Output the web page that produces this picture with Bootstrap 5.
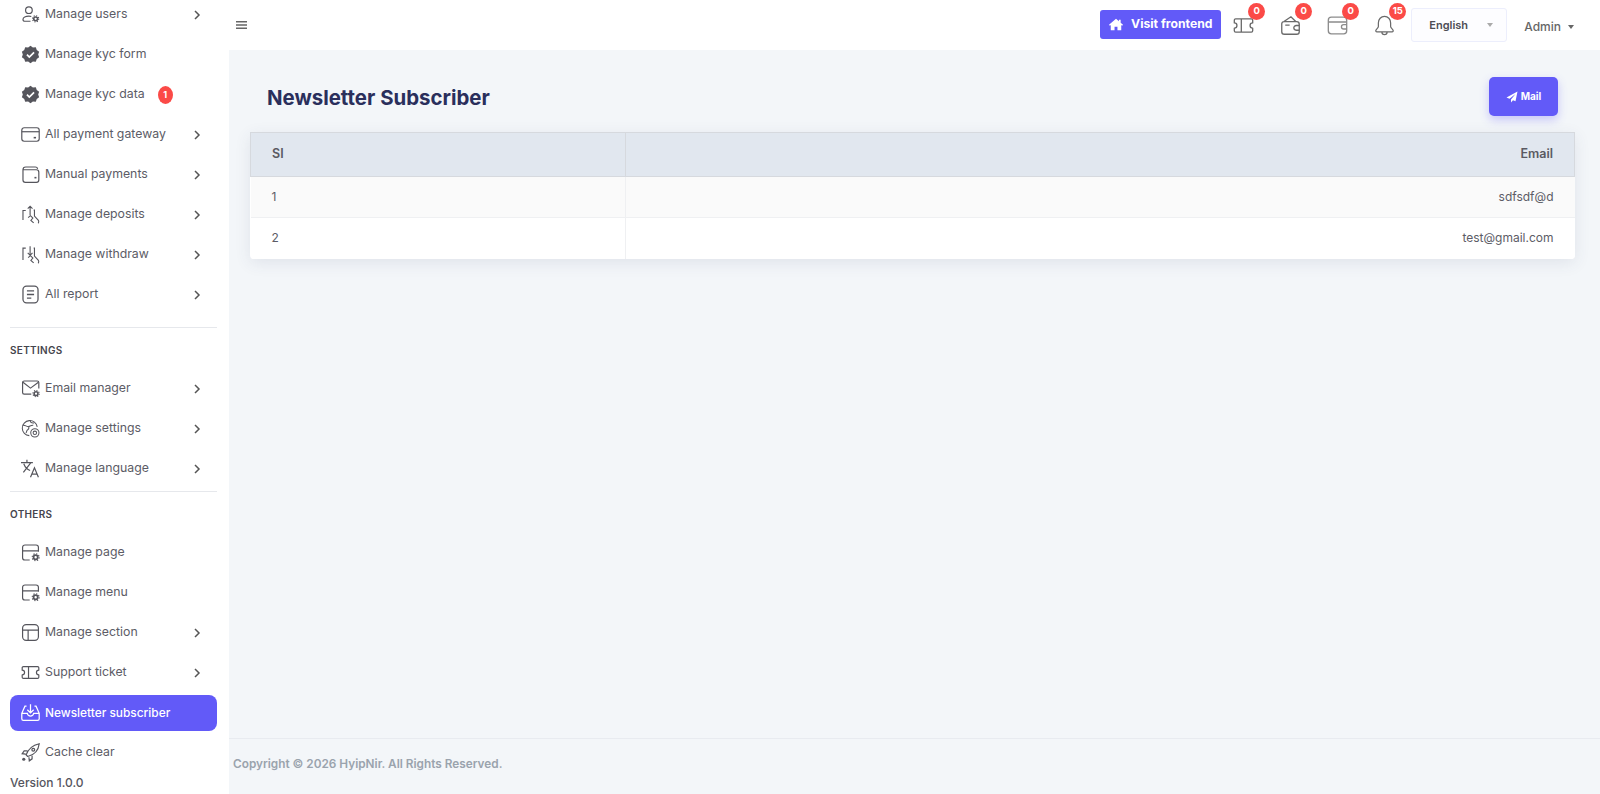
<!DOCTYPE html>
<html lang="en">
<head>
<meta charset="utf-8">
<title>Newsletter Subscriber</title>
<link href="https://cdn.jsdelivr.net/npm/bootstrap@5.3.0/dist/css/bootstrap.min.css" rel="stylesheet">
<style>
html,body{height:794px;overflow:hidden}
body{font-family:Inter,"Noto Sans",sans-serif;font-size:13px;color:#5c5c66;background:#f3f6f9}
.shell{height:794px}
.side{width:229px;height:794px;overflow:hidden;background:#fff;padding:0 12px 0 10px;flex:none}
.side-list{margin-top:-3.5px}
.side-item{height:36px;margin-bottom:4px;padding-left:11px;padding-right:16px;border-radius:8px;color:#5c5c66;text-decoration:none;font-size:12.3px;gap:5px}
.side-item svg.ic{width:19px;height:19px;flex:none;color:#55555c}
.side-item.on{background:#625af8;color:#fff;font-weight:500;font-size:11.9px}
.side-item.on svg.ic{color:#fff}
.chev{width:8px;height:10px;margin-left:auto;color:#555}
.cnt{background:#fb4a47;color:#fff;border-radius:50%;width:15px;height:18px;font-size:9px;font-weight:700;margin-left:8px}
.side-rule{border-top:1px solid #e6e8ec;margin:14px 0 0;opacity:1}
.side-rule.tight{margin-top:0}
.side-head{font-size:10px;font-weight:600;color:#45454d;letter-spacing:.3px;height:43px;padding-top:3px}
.ver{font-size:12px;color:#55555e;font-weight:500;margin-top:-1px}
.main-col{min-width:0}
.topbar{height:50px;background:#fff;padding:0 26px 0 7px}
.burger{width:11px;height:10px;color:#666}
.visit{background:#625af8;border:0;border-radius:3px;height:29px;width:121px;color:#fff;font-size:12.2px;font-weight:700;gap:8px;margin-top:-1px}
.visit:hover,.mailbtn:hover{background:#625af8;color:#fff}
.visit svg{width:14px;height:13px}
.tb-ic{width:47px;height:34px;color:#6a6a6a;padding-right:2px}
.tb-ic svg{width:21px;height:21px}
.tb-ic.soft{color:#8c8c8c}
.dot{position:absolute;top:-5px;right:3px;min-width:17px;height:17px;border-radius:50%;background:#fb4a47;color:#fff;font-size:9.5px;font-weight:700}
.lang{width:96px;height:34px;border:1px solid #eceefc;border-radius:3px;background:#fdfdff;padding:0 13px 0 17px;font-size:11px;font-weight:600;color:#4d4d55;margin-left:2px}
.tri{width:0;height:0;border-left:3.5px solid transparent;border-right:3.5px solid transparent;border-top:4px solid #aaa}
.admin{margin-left:17px;font-size:12px;font-weight:500;color:#666;gap:7px;margin-top:3px}
.admin .tri{border-top-color:#666;flex:none}
.body-area{padding:0 25px 0 21px}
.pagehead{height:82px;padding:27px 17px 0 17px}
.pagehead h1{font-size:20.4px;font-weight:700;color:#2a2f5c;margin:0;padding-top:9px}
.mailbtn{background:#625af8;border:0;border-radius:5px;width:69px;height:39px;color:#fff;font-size:10px;font-weight:700;box-shadow:0 4px 10px rgba(98,90,248,.3);gap:3px}
.mailbtn svg{width:12px;height:12px}
.tbl-wrap{box-shadow:0 4px 16px rgba(60,70,110,.1);border-radius:0 0 4px 4px;background:#fff;overflow:hidden}
.tbl{margin:0;font-size:12px;color:#5c5c66}
.tbl>thead>tr>th{background:#e1e7ef;height:44px;padding:0 21px;border:1px solid #d6d9de;font-weight:600;color:#5a5a62;vertical-align:middle;font-size:12.5px}
.tbl>tbody>tr>td{height:41px;padding:0 21px;vertical-align:middle;border:0;border-bottom:1px solid #eff0f2;color:#5c5c66;background:#fff;box-shadow:none}
.tbl>tbody>tr:nth-child(odd)>td{background:#fafafa}
.tbl>tbody>tr:last-child>td{border-bottom:0}
.tbl td:first-child,.tbl th:first-child{width:375px}
.tbl>tbody>tr>td:first-child{border-right:1px solid #eff0f2}
.foot{height:56px;border-top:1px solid #e8ebf0;padding:0 0 4px 4px;font-size:11.8px;font-weight:600;color:#9aa3ad}
</style>
</head>
<body>
<svg width="0" height="0" class="position-absolute">
<defs>
<symbol id="gear" viewBox="0 0 10 10"><circle cx="5" cy="5" r="2.400" fill="none" stroke="currentColor" stroke-width="2"/><circle cx="5" cy="5" r="4" fill="none" stroke="currentColor" stroke-width="1.300" stroke-dasharray="1.500 1.640"/></symbol>
<symbol id="i-user" viewBox="0 0 24 24"><g fill="none" stroke="currentColor" stroke-width="1.500"><circle cx="10" cy="6.500" r="4.200"/><path d="M13 14.500c-1-.3-2-.5-3-.5-4 0-7.500 1.700-7.500 4.200 0 1.200 1 2.300 2.500 2.300H12"/></g><use href="#gear" x="13.500" y="12.500" width="10" height="10"/></symbol>
<symbol id="i-badge" viewBox="0 0 24 24"><path fill="currentColor" d="M12 1l3 2.300 3.700-.4 1.200 3.500 3 2.200-1.200 3.400 1.200 3.400-3 2.200-1.200 3.500-3.700-.4L12 23l-3-2.300-3.700.4-1.200-3.500-3-2.200L2.300 12 1.100 8.600l3-2.200 1.200-3.500 3.700.4z"/><path d="M7.500 12.300l3 3 6-6" fill="none" stroke="#fff" stroke-width="2.200"/></symbol>
<symbol id="i-card" viewBox="0 0 24 24"><g fill="none" stroke="currentColor" stroke-width="1.500"><rect x="1" y="3.500" width="22" height="17" rx="3"/><path d="M1 8.500h22"/><path d="M16 16h3" stroke-width="2"/></g></symbol>
<symbol id="i-wallet" viewBox="0 0 24 24"><g fill="none" stroke="currentColor" stroke-width="1.500"><path d="M2.500 6V19a3 3 0 0 0 3 3h14a3 3 0 0 0 3-3V9a3 3 0 0 0-3-3H2.500zM2.500 6A3.500 3.500 0 0 1 6 2.500h12A3 3 0 0 1 21 5"/><path d="M17 16h2.500" stroke-width="2"/></g></symbol>
<symbol id="i-dep" viewBox="0 0 24 24"><g fill="none" stroke="currentColor" stroke-width="1.400"><path d="M11.500 13V1.500M8.500 4.500l3-3 3 3M2.500 19V7h3.500M16 6.500h1v7.500l5 5.500c.6 1 .4 3-.5 3.500"/><path d="M9 16l3-2.500 3 3-2.500 3 3.500 3"/></g></symbol>
<symbol id="i-wd" viewBox="0 0 24 24"><g fill="none" stroke="currentColor" stroke-width="1.400"><path d="M11.500 1.500V13M8.500 10l3 3 3-3M2.500 19V4h3.500M16 4h1v10l5 5.500c.6 1 .4 3-.5 3.500"/><path d="M9 16l3-2.500 3 3-2.500 3 3.500 3"/></g></symbol>
<symbol id="i-doc" viewBox="0 0 24 24"><g fill="none" stroke="currentColor" stroke-width="1.600"><rect x="2.500" y="1.500" width="19" height="21" rx="4.500"/><path d="M7.500 7.500h9M7.500 12h9M7.500 16.500h5.500"/></g></symbol>
<symbol id="i-mail" viewBox="0 0 24 24"><g fill="none" stroke="currentColor" stroke-width="1.500"><path d="M13 19H4a2 2 0 0 1-2-2V4.500a2 2 0 0 1 2-2h16.500a2 2 0 0 1 2 2v7.500"/><path d="M2.500 4l9.500 7.500L22 4"/></g><use href="#gear" x="14" y="13.500" width="10" height="10"/></symbol>
<symbol id="i-globe" viewBox="0 0 24 24"><g fill="none" stroke="currentColor" stroke-width="1.300"><path d="M10.500 21A9.500 9.500 0 1 1 20.500 10"/><path d="M2 8c3-1 4.500 1.500 6.500 1.500s2 3 0 4-1 3.500-2.500 4M12 1.500c-1 2.500 1 4 4.500 3.500M9.500 9.500c2-.5 4-2 6-1.500"/><circle cx="17.500" cy="17.500" r="5.200"/><circle cx="17.500" cy="17.500" r="2.200"/></g></symbol>
<symbol id="i-lang" viewBox="0 0 24 24"><g fill="none" stroke="currentColor" stroke-width="1.500"><path d="M0 4.500h15M7.500 1v3.500M3 17L12.500 4.500M3.500 6c1.500 4 5 7.500 8 8.500"/><path d="M12 23l5-12 5 12M13.500 19h7"/></g></symbol>
<symbol id="i-page" viewBox="0 0 24 24"><g fill="none" stroke="currentColor" stroke-width="1.500"><path d="M11 21.500H5a3 3 0 0 1-3-3v-13a3 3 0 0 1 3-3h14a3 3 0 0 1 3 3V11M2 10h20"/></g><use href="#gear" x="13" y="12.500" width="11" height="11"/></symbol>
<symbol id="i-sec" viewBox="0 0 24 24"><g fill="none" stroke="currentColor" stroke-width="1.500"><rect x="2" y="2" width="20" height="20" rx="4.500"/><path d="M2 9h20M9 9v13"/></g></symbol>
<symbol id="i-tick" viewBox="0 0 24 24"><g fill="none" stroke="currentColor" stroke-width="1.500" stroke-linejoin="round"><path d="M3 4.500h18a1.500 1.500 0 0 1 1.500 1.500v3a3 3 0 0 0 0 6v3a1.500 1.500 0 0 1-1.500 1.500H3A1.500 1.500 0 0 1 1.500 18v-3a3 3 0 0 0 0-6V6A1.500 1.500 0 0 1 3 4.500zM9.500 4.500v15"/></g></symbol>
<symbol id="i-inbox" viewBox="0 0 24 24"><g fill="none" stroke="currentColor" stroke-width="1.600"><path d="M12 1.500V12M8 8.500l4 4 4-4M7 4H5L1 13v7a2 2 0 0 0 2 2h18a2 2 0 0 0 2-2v-7L19 4h-2M1 13h7c0 2 2 3.500 4 3.500s4-1.500 4-3.500h7"/></g></symbol>
<symbol id="i-rocket" viewBox="0 0 24 24"><g fill="none" stroke="currentColor" stroke-width="1.500"><path d="M8.500 17L6.500 15C9 8 14 3 23 1c-1 9-6 14-14.500 16zM8 10H4l-2.500 3.500L6 14M14 16v4l-3.500 2.500L10 18"/><circle cx="15.500" cy="8.500" r="1.800"/></g><circle cx="3.500" cy="20.500" r="2" fill="currentColor"/></symbol>
<symbol id="i-chev" viewBox="0 0 8 10"><path d="M2 1l4 4-4 4" fill="none" stroke="currentColor" stroke-width="1.500"/></symbol>
<symbol id="i-wal2" viewBox="0 0 24 24"><g fill="none" stroke="currentColor" stroke-width="1.500"><path d="M4.500 7.500H19a3 3 0 0 1 3 3V19a3 3 0 0 1-3 3H5a3 3 0 0 1-3-3V10a2.500 2.500 0 0 1 2.500-2.500zM4.500 7.500L12.500 2l5.500 5.500M6 11.500h5"/><path d="M22 12h-3.500a2.700 2.700 0 0 0 0 5.400H22"/></g></symbol>
<symbol id="i-wal3" viewBox="0 0 24 24"><g fill="none" stroke="currentColor" stroke-width="1.500"><rect x="1.500" y="2.500" width="21" height="19" rx="3.500"/><path d="M1.500 8h21M22.500 11h-3.500a2.500 2.500 0 0 0 0 5h3.500"/></g></symbol>
<symbol id="i-bell" viewBox="0 0 24 24"><g fill="none" stroke="currentColor" stroke-width="1.400"><path d="M12 1.500c-4 0-7 3.300-7 7.500v4c0 2-3 3.500-3 5 0 .8.500 1.200 1.200 1.200h17.600c.7 0 1.200-.4 1.200-1.200 0-1.500-3-3-3-5V9c0-4.200-3-7.500-7-7.500zM9 19.500a3 3 0 0 0 6 0"/></g></symbol>
</defs>
</svg>
<div class="shell d-flex">
<aside class="side d-flex flex-column">
<div class="side-list">
<a class="side-item d-flex align-items-center" href="#"><svg class="ic"><use href="#i-user"/></svg><span>Manage users</span><svg class="chev"><use href="#i-chev"/></svg></a>
<a class="side-item d-flex align-items-center" href="#"><svg class="ic"><use href="#i-badge"/></svg><span>Manage kyc form</span></a>
<a class="side-item d-flex align-items-center" href="#"><svg class="ic"><use href="#i-badge"/></svg><span>Manage kyc data</span><span class="cnt d-flex align-items-center justify-content-center">1</span></a>
<a class="side-item d-flex align-items-center" href="#"><svg class="ic"><use href="#i-card"/></svg><span>All payment gateway</span><svg class="chev"><use href="#i-chev"/></svg></a>
<a class="side-item d-flex align-items-center" href="#"><svg class="ic"><use href="#i-wallet"/></svg><span>Manual payments</span><svg class="chev"><use href="#i-chev"/></svg></a>
<a class="side-item d-flex align-items-center" href="#"><svg class="ic"><use href="#i-dep"/></svg><span>Manage deposits</span><svg class="chev"><use href="#i-chev"/></svg></a>
<a class="side-item d-flex align-items-center" href="#"><svg class="ic"><use href="#i-wd"/></svg><span>Manage withdraw</span><svg class="chev"><use href="#i-chev"/></svg></a>
<a class="side-item d-flex align-items-center" href="#"><svg class="ic"><use href="#i-doc"/></svg><span>All report</span><svg class="chev"><use href="#i-chev"/></svg></a>
<hr class="side-rule">
<div class="side-head d-flex align-items-center">SETTINGS</div>
<a class="side-item d-flex align-items-center" href="#"><svg class="ic"><use href="#i-mail"/></svg><span>Email manager</span><svg class="chev"><use href="#i-chev"/></svg></a>
<a class="side-item d-flex align-items-center" href="#"><svg class="ic"><use href="#i-globe"/></svg><span>Manage settings</span><svg class="chev"><use href="#i-chev"/></svg></a>
<a class="side-item d-flex align-items-center" href="#"><svg class="ic"><use href="#i-lang"/></svg><span>Manage language</span><svg class="chev"><use href="#i-chev"/></svg></a>
<hr class="side-rule tight">
<div class="side-head d-flex align-items-center">OTHERS</div>
<a class="side-item d-flex align-items-center" href="#"><svg class="ic"><use href="#i-page"/></svg><span>Manage page</span></a>
<a class="side-item d-flex align-items-center" href="#"><svg class="ic"><use href="#i-page"/></svg><span>Manage menu</span></a>
<a class="side-item d-flex align-items-center" href="#"><svg class="ic"><use href="#i-sec"/></svg><span>Manage section</span><svg class="chev"><use href="#i-chev"/></svg></a>
<a class="side-item d-flex align-items-center" href="#"><svg class="ic"><use href="#i-tick"/></svg><span>Support ticket</span><svg class="chev"><use href="#i-chev"/></svg></a>
<a class="side-item on d-flex align-items-center" href="#"><svg class="ic"><use href="#i-inbox"/></svg><span>Newsletter subscriber</span></a>
<a class="side-item d-flex align-items-center" href="#"><svg class="ic"><use href="#i-rocket"/></svg><span>Cache clear</span></a>
</div>
<div class="ver">Version 1.0.0</div>
</aside>
<div class="main-col flex-grow-1 d-flex flex-column">
<header class="topbar d-flex align-items-center">
<svg class="burger" viewBox="0 0 12 10"><path d="M0 1.500h12M0 5h12M0 8.500h12" stroke="currentColor" stroke-width="1.600"/></svg>
<div class="ms-auto d-flex align-items-center">
<button class="btn visit d-flex align-items-center justify-content-center p-0" type="button"><svg viewBox="0 0 24 22"><path fill="currentColor" d="M12 1L0 11.500l1.500 1.700L3 12v9h6.500v-6h5v6H21v-9l1.500 1.200 1.500-1.700-4-3.500V3h-3v2.300z"/></svg>Visit frontend</button>
<div class="tb-ic position-relative d-flex align-items-center justify-content-center"><svg><use href="#i-tick"/></svg><span class="dot d-flex align-items-center justify-content-center">0</span></div>
<div class="tb-ic position-relative d-flex align-items-center justify-content-center"><svg><use href="#i-wal2"/></svg><span class="dot d-flex align-items-center justify-content-center">0</span></div>
<div class="tb-ic soft position-relative d-flex align-items-center justify-content-center"><svg><use href="#i-wal3"/></svg><span class="dot d-flex align-items-center justify-content-center">0</span></div>
<div class="tb-ic position-relative d-flex align-items-center justify-content-center"><svg><use href="#i-bell"/></svg><span class="dot d-flex align-items-center justify-content-center">15</span></div>
<div class="lang d-flex align-items-center justify-content-between"><span>English</span><span class="tri"></span></div>
<div class="admin d-flex align-items-center"><span>Admin</span><span class="tri"></span></div>
</div>
</header>
<main class="body-area flex-grow-1">
<div class="pagehead d-flex justify-content-between align-items-start">
<h1>Newsletter Subscriber</h1>
<button class="btn mailbtn d-flex align-items-center justify-content-center p-0" type="button"><svg viewBox="0 0 24 24"><path fill="currentColor" d="M23 1L1 13l6 2.500L19 6 10 17v6l4-4.500 5 2z"/></svg>Mail</button>
</div>
<div class="tbl-wrap">
<table class="table tbl">
<thead><tr><th>SI</th><th class="text-end">Email</th></tr></thead>
<tbody>
<tr><td>1</td><td class="text-end">sdfsdf@d</td></tr>
<tr><td>2</td><td class="text-end">test@gmail.com</td></tr>
</tbody>
</table>
</div>
</main>
<footer class="foot d-flex align-items-center">Copyright © 2026 HyipNir. All Rights Reserved.</footer>
</div>
</div>
</body>
</html>
